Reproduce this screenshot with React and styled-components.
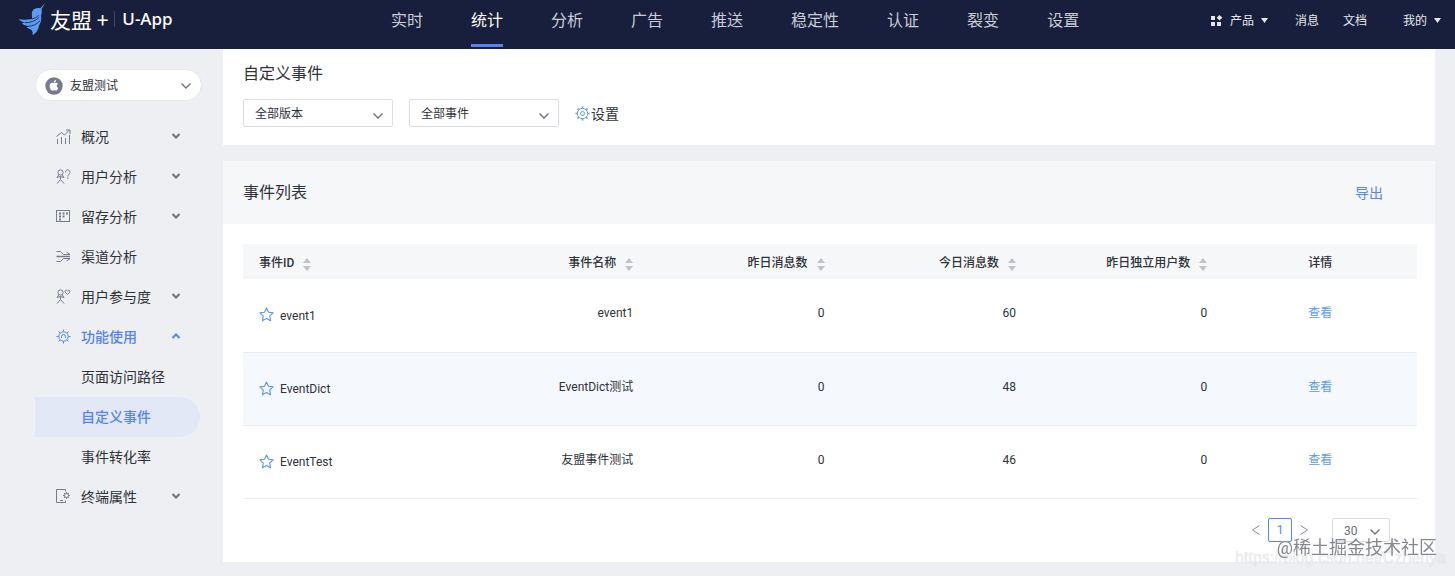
import React, { useState } from 'react';
import styled, { createGlobalStyle, css } from 'styled-components';

const GlobalStyle = createGlobalStyle`
  * {
    box-sizing: border-box;
  }
  body {
    margin: 0;
    background: #edeff3;
    color: #2f3238;
    font-family: Roboto, "Noto Sans CJK SC", sans-serif;
    font-size: 12px;
    line-height: 20px;
  }
  button, select {
    font: inherit;
    color: inherit;
  }
  a {
    text-decoration: none;
  }
`;

/* ---------- top bar ---------- */

const TopBar = styled.header`
  display: flex;
  align-items: stretch;
  height: 49px;
  padding: 0 14px 0 17px;
  background: #181f3c;
  color: #fff;
`;

const Brand = styled.a`
  display: flex;
  align-items: center;
  flex: 0 0 374px;
  height: 38px;
  color: #fff;
`;

const BrandName = styled.span`
  margin-left: 3px;
  font-family: "Noto Sans CJK SC", sans-serif;
  font-size: 21px;
  font-weight: 400;
`;

const BrandProduct = styled.span`
  margin-left: 6px;
  padding-left: 7px;
  border-left: 1px solid #3d4560;
  font-family: "Noto Sans", sans-serif;
  font-size: 17px;
  font-weight: 500;
  line-height: 16px;
`;

const MainNav = styled.nav`
  display: flex;
  gap: 48px;
`;

const MainNavLink = styled.a`
  height: 47px;
  border-bottom: 3px solid ${(p) => (p.$active ? '#5584ee' : 'transparent')};
  color: ${(p) => (p.$active ? '#fff' : '#c9ccd8')};
  font-size: 16px;
  line-height: 42px;
`;

const UserNav = styled.div`
  display: flex;
  align-items: center;
  height: 41px;
  margin-left: auto;
`;

const UserLink = styled.a`
  margin-left: ${(p) => p.$gap || 0}px;
  color: #e6e8f0;
`;

const UserButton = styled.button`
  display: flex;
  align-items: center;
  gap: 7px;
  margin-left: ${(p) => p.$gap || 0}px;
  padding: 0;
  border: 0;
  background: none;
  color: #e6e8f0;
`;

/* ---------- sidebar ---------- */

const Body = styled.div`
  display: flex;
  align-items: flex-start;
`;

const Sidebar = styled.aside`
  flex: 0 0 223px;
  padding: 20px 21px 0 35px;
`;

const AppPicker = styled.button`
  display: flex;
  align-items: center;
  width: 100%;
  height: 32px;
  margin-bottom: 16px;
  padding: 1px 10px 0 9px;
  border: 1px solid #e4e6ec;
  border-radius: 16px;
  background: #fff;
`;

const AppName = styled.span`
  flex: 1;
  margin-left: 7px;
  text-align: left;
`;

const MenuItem = styled.button`
  display: flex;
  align-items: center;
  width: 100%;
  height: 40px;
  padding: 0 21px;
  border: 0;
  background: none;
  color: ${(p) => (p.$active ? '#5584ee' : '#2f3238')};
  font-size: 14px;
  font-weight: ${(p) => (p.$active ? 500 : 400)};

  svg {
    margin-bottom: 2px;
  }
`;

const MenuLabel = styled.span`
  flex: 1;
  margin-left: 10px;
  text-align: left;
`;

const SubItem = styled.a`
  display: block;
  margin-right: 2px;
  padding-left: 46px;
  border-radius: 0 20px 20px 0;
  color: #2f3238;
  font-size: 14px;
  line-height: 40px;
  ${(p) =>
    p.$active &&
    css`
      background: #e3e8f7;
      color: #5584ee;
      font-weight: 500;
    `}
`;

/* ---------- content ---------- */

const Content = styled.main`
  flex: 1;
  min-width: 0;
  padding: 0 20px 14px 0;
`;

const FilterCard = styled.section`
  margin-bottom: 16px;
  padding: 13px 20px 18px;
  background: #fff;
`;

const Title = styled.h1`
  margin: 0;
  font-size: 16px;
  font-weight: 400;
  line-height: 24px;
`;

const Filters = styled.div`
  display: flex;
  align-items: center;
  gap: 16px;
  margin-top: 13px;
`;

const SelectBox = styled.label`
  display: inline-grid;
  align-items: center;
  width: ${(p) => p.$width}px;

  > * {
    grid-area: 1 / 1;
  }
  > svg {
    justify-self: end;
    margin: 5px 10px 0 0;
    pointer-events: none;
  }
`;

const Select = styled.select`
  width: 100%;
  height: ${(p) => p.$height}px;
  padding: 2px 11px 0;
  border: 1px solid #dcdee3;
  border-radius: 2px;
  background: #fff;
  appearance: none;
  color: ${(p) => p.$color || '#2f3238'};
`;

const SettingButton = styled.button`
  display: flex;
  align-items: center;
  gap: 1px;
  padding: 2px 0 0;
  border: 0;
  background: none;
  font-size: 14px;

  svg {
    margin-bottom: 2px;
  }
`;

const ListCard = styled.section`
  background: #fff;
`;

const ListHeader = styled.div`
  display: flex;
  align-items: center;
  justify-content: space-between;
  height: 63px;
  padding: 1px 52px 0 20px;
  border-radius: 3px 3px 0 0;
  background: #f6f7f9;
`;

const ExportLink = styled.a`
  color: #5584ee;
  font-size: 14px;
`;

const ListBody = styled.div`
  padding: 20px 18px 20px 20px;
`;

const Table = styled.table`
  width: 100%;
  border-collapse: collapse;
  table-layout: fixed;
`;

const HeadCell = styled.th`
  width: ${(p) => p.$width};
  height: 35px;
  padding: 3px 16px 0;
  background: #f6f7f9;
  font-weight: 500;
  text-align: ${(p) => p.$align || 'right'};
`;

const SortButton = styled.button`
  display: inline-flex;
  align-items: center;
  gap: 9px;
  padding: 0;
  border: 0;
  background: none;
  font-weight: 500;
  white-space: nowrap;

  svg {
    margin-top: 3px;
  }
`;

const Row = styled.tr`
  background: ${(p) => (p.$highlight ? '#f5f9fe' : '#fff')};
  border-bottom: 1px solid #eaecef;
`;

const Cell = styled.td`
  height: 73px;
  padding: 0 16px 4px;
  text-align: ${(p) => p.$align || 'right'};
`;

const EventId = styled.div`
  display: flex;
  align-items: center;
  gap: 6px;
  padding-top: 5px;
`;

const StarButton = styled.button`
  display: flex;
  padding: 0 0 2px;
  border: 0;
  background: none;
`;

const ViewLink = styled.a`
  color: #5b9bec;
`;

const Pager = styled.div`
  display: flex;
  align-items: center;
  justify-content: flex-end;
  gap: 8px;
  margin-top: 19px;
  padding-right: 27px;
`;

const PageArrow = styled.button`
  display: flex;
  padding: 0;
  border: 0;
  background: none;
`;

const PageNumber = styled.button`
  width: 24px;
  height: 24px;
  padding: 1px 0 0;
  border: 1px solid #5584ee;
  border-radius: 2px;
  background: #fff;
  color: #5584ee;
`;

const PageSize = styled.div`
  display: flex;
  height: 24px;
  margin-left: 16px;
`;

const Credit = styled.div`
  position: fixed;
  right: ${(p) => p.$right}px;
  bottom: ${(p) => p.$bottom}px;
  color: ${(p) => p.$color};
  font-family: ${(p) => p.$font || 'inherit'};
  font-size: ${(p) => p.$size}px;
  line-height: 20px;
  text-shadow: ${(p) => p.$shadow};
  white-space: nowrap;
  pointer-events: none;
`;

/* ---------- icons ---------- */

const BirdLogo = () => (
  <svg width="30" height="33" viewBox="6 8 88 99">
    <path
      d="M89 9 L75 24 Q62 21 54 28 Q48 34 50 47 L50 56 Q30 60 10 57 Q16 65 28 67 L19 69 Q26 77 40 78 L34 81 Q40 87 48 88 Q54 94 52 105 Q69 93 71 76 Q80 60 77 47 Q81 36 79 26 Z"
      fill="#5b9cf5"
    />
    <path
      d="M28 67 Q54 68 72 51 M38 78 Q60 77 74 61 M50 56 Q62 54 70 45"
      fill="none"
      stroke="#181f3c"
      strokeWidth="2.500"
    />
  </svg>
);

const GridIcon = () => (
  <svg width="12" height="12" viewBox="0 0 12 12" fill="currentColor">
    <rect x="0" y="1" width="4" height="4" />
    <path d="M8.500 0l2.800 2.800-2.800 2.800-2.800-2.800z" />
    <rect x="0" y="7" width="4" height="4" />
    <rect x="6" y="7" width="4" height="4" />
  </svg>
);

const CaretDown = () => (
  <svg width="7" height="5" viewBox="0 0 7 5" fill="currentColor">
    <path d="M0 0h7L3.5 5z" />
  </svg>
);

const AppleBadge = () => (
  <svg width="18" height="18" viewBox="0 0 18 18">
    <circle cx="9" cy="9" r="8.7" fill="#757a8e" />
    <path
      d="M9 6.2C7.4 5.3 4.6 5.8 4.6 9c0 2.2 1.4 4.7 2.7 4.7.7 0 .9-.4 1.8-.4s1.1.4 1.8.4c1 0 2-1.3 2.3-2.7-1.9-.9-1.9-3.3-.2-4.2C12 5.600 10.300 5.700 9 6.200z M8.800 5.600c0-1.400.9-2.300 2.200-2.500.1 1.400-.8 2.500-2.200 2.500z"
      fill="#fff"
    />
  </svg>
);

const Chevron = ({ color = '#6b6f78' }) => (
  <svg width="10" height="6" viewBox="0 0 10 6" fill="none" stroke={color} strokeWidth="1.3">
    <path d="M.5.500 5 5 9.500.500" />
  </svg>
);

const MenuChevron = ({ up }) => (
  <svg width="10" height="8" viewBox="0 0 10 8" fill="none" stroke={up ? '#5584ee' : '#6f737b'} strokeWidth="2">
    <path d={up ? 'M1.500 6 5 2.500 8.500 6' : 'M1.500 2 5 5.500 8.500 2'} />
  </svg>
);

const SortIcon = () => (
  <svg width="8" height="13" viewBox="0 0 8 13" fill="#bfc2c7">
    <path d="M4 0l4 5H0z" />
    <path d="M4 13l4-5H0z" />
  </svg>
);

const StarIcon = () => (
  <svg width="15" height="15" viewBox="0 0 15 15" fill="none" stroke="#5b94f0" strokeWidth="1.100" strokeLinejoin="round">
    <path d="M7.500 1l2 4.300 4.600.6-3.400 3.200.9 4.700-4.100-2.300-4.100 2.300.9-4.700L.9 5.900l4.600-.6z" />
  </svg>
);

const GearIcon = () => (
  <svg width="15" height="15" viewBox="0 0 15 15" fill="none" stroke="#5b9cf0">
    <circle cx="7.500" cy="7.500" r="5.200" />
    <circle cx="7.500" cy="7.500" r="2" />
    <path
      d="M7.500.500v1.800M7.500 12.700v1.800M.5 7.500h1.800M12.700 7.500h1.800M2.500 2.500l1.300 1.300M11.200 11.200l1.300 1.300M2.500 12.500l1.300-1.300M11.200 3.800l1.300-1.300"
      strokeWidth="1.600"
    />
  </svg>
);

const ArrowIcon = ({ next }) => (
  <svg width="8" height="10" viewBox="0 0 8 10" fill="none" stroke="#888c94">
    <path d={next ? 'M.5.500 7.500 5 .5 9.500' : 'M7.500.500.5 5l7 4.500'} />
  </svg>
);

const menuShapes = {
  overview: (
    <path d="M1.500 10v5M5.500 8v7M9.500 9v6M13.500 6v9M.5 7.500l5-4 3 2.500 5-5M10 1h4v4" />
  ),
  user: (
    <>
      <circle cx="4.500" cy="3.500" r="2.600" />
      <path d="M2.800 5.800 1 8.500M6.200 5.800 8 8.500M1 8.500 4.500 7.500 8 8.500M4.500 7.500v3L1 14.500M4.500 10.500 8 14.500M9.500 3.500c0-3.500 4.500-3.500 4.500 0 0 1.800-2.200 1.600-2.200 4M11.800 8.500v1.500" />
    </>
  ),
  retention: (
    <>
      <rect x=".5" y="1.500" width="13" height="11" />
      <path d="M3 4.500h2M6.500 4.500h2M10 4.500h2M3 7.500h2M6.500 7.500h2M3 10.500h2" strokeWidth="1.800" />
    </>
  ),
  channel: (
    <>
      <path d="M.5 2.500h4l3 3h6.500M.5 12.500h4l3-3h6.500M10.500 3l3.500 2.500M10.500 12l3.500-2.500" />
      <path d="M.5 7.500h13.500" strokeWidth="1.500" />
    </>
  ),
  engage: (
    <>
      <circle cx="4.500" cy="3.500" r="2.600" />
      <path d="M2.800 5.800 1 8.500M6.200 5.800 8 8.500M1 8.500 4.500 7.500 8 8.500M4.500 7.500v3L1 14.500M4.500 10.500 8 14.500M11.500 5.500 9 3c-.6-1.500 1.500-2.500 2.500-1 1-1.500 3.100-.5 2.500 1z" />
    </>
  ),
  feature: (
    <>
      <circle cx="7.500" cy="7.500" r="4.700" />
      <path d="M5.500 9V7.500a2 2 0 0 1 4 0V9M7.500.500v2M7.500 12.500v2M.5 7.500h2M12.500 7.500h2M2.500 2.500 4 4M11 11l1.500 1.500M2.500 12.500 4 11M11 4l1.500-1.500" />
    </>
  ),
  device: (
    <>
      <path d="M9.500 2.500v-2h-9v13h9v-2M4 11.500h3" />
      <circle cx="10.500" cy="6.500" r="2" />
      <path d="M10.500 3v1.500M10.500 8.500V10M7 6.500h1.500M12.500 6.500H14M8 4l1 1M12 8l1 1M8 9l1-1M12 5l1-1" />
    </>
  ),
};

const MenuIcon = ({ name, color }) => (
  <svg width="15" height="15" viewBox="0 0 15 15" fill="none" stroke={color} strokeWidth="1">
    {menuShapes[name]}
  </svg>
);

/* ---------- data ---------- */

const navItems = ['实时', '统计', '分析', '广告', '推送', '稳定性', '认证', '裂变', '设置'];

const menu = [
  { label: '概况', icon: 'overview', arrow: true },
  { label: '用户分析', icon: 'user', arrow: true },
  { label: '留存分析', icon: 'retention', arrow: true },
  { label: '渠道分析', icon: 'channel' },
  { label: '用户参与度', icon: 'engage', arrow: true },
  {
    label: '功能使用',
    icon: 'feature',
    arrow: true,
    children: ['页面访问路径', '自定义事件', '事件转化率'],
  },
  { label: '终端属性', icon: 'device', arrow: true },
];

const columns = [
  { label: '事件ID', width: '18.3%', align: 'left' },
  { label: '事件名称', width: '16.3%' },
  { label: '昨日消息数', width: '16.3%' },
  { label: '今日消息数', width: '16.3%' },
  { label: '昨日独立用户数', width: '16.3%' },
];

const events = [
  { id: 'event1', name: 'event1', yesterday: 0, today: 60, users: 0 },
  { id: 'EventDict', name: 'EventDict测试', yesterday: 0, today: 48, users: 0 },
  { id: 'EventTest', name: '友盟事件测试', yesterday: 0, today: 46, users: 0 },
];

function Header() {
  return (
    <TopBar>
      <Brand href="#">
        <BirdLogo />
        <BrandName>友盟 +</BrandName>
        <BrandProduct>U-App</BrandProduct>
      </Brand>
      <MainNav>
        {navItems.map((item) => (
          <MainNavLink key={item} href="#" $active={item === '统计'}>
            {item}
          </MainNavLink>
        ))}
      </MainNav>
      <UserNav>
        <UserButton>
          <GridIcon />
          产品
          <CaretDown />
        </UserButton>
        <UserLink href="#" $gap={27}>消息</UserLink>
        <UserLink href="#" $gap={24}>文档</UserLink>
        <UserButton $gap={36}>
          我的
          <CaretDown />
        </UserButton>
      </UserNav>
    </TopBar>
  );
}

function SideMenu() {
  return (
    <Sidebar>
      <AppPicker>
        <AppleBadge />
        <AppName>友盟测试</AppName>
        <Chevron />
      </AppPicker>
      <nav>
        {menu.map(({ label, icon, arrow, children }) => (
          <React.Fragment key={label}>
            <MenuItem $active={!!children} aria-expanded={!!children}>
              <MenuIcon name={icon} color={children ? '#5584ee' : '#777c8c'} />
              <MenuLabel>{label}</MenuLabel>
              {arrow && <MenuChevron up={!!children} />}
            </MenuItem>
            {children &&
              children.map((child) => (
                <SubItem key={child} href="#" $active={child === '自定义事件'}>
                  {child}
                </SubItem>
              ))}
          </React.Fragment>
        ))}
      </nav>
    </Sidebar>
  );
}

function EventTable() {
  return (
    <Table>
      <thead>
        <tr>
          {columns.map((col) => (
            <HeadCell key={col.label} scope="col" $width={col.width} $align={col.align}>
              <SortButton>
                {col.label}
                <SortIcon />
              </SortButton>
            </HeadCell>
          ))}
          <HeadCell scope="col" $align="center">详情</HeadCell>
        </tr>
      </thead>
      <tbody>
        {events.map((event, i) => (
          <Row key={event.id} $highlight={i === 1}>
            <Cell $align="left">
              <EventId>
                <StarButton aria-label={`收藏 ${event.id}`}>
                  <StarIcon />
                </StarButton>
                {event.id}
              </EventId>
            </Cell>
            <Cell>{event.name}</Cell>
            <Cell>{event.yesterday}</Cell>
            <Cell>{event.today}</Cell>
            <Cell>{event.users}</Cell>
            <Cell $align="center">
              <ViewLink href="#">查看</ViewLink>
            </Cell>
          </Row>
        ))}
      </tbody>
    </Table>
  );
}

function App() {
  const [version, setVersion] = useState('全部版本');
  const [kind, setKind] = useState('全部事件');
  const [size, setSize] = useState('30');

  return (
    <>
      <GlobalStyle />
      <Header />
      <Body>
        <SideMenu />
        <Content>
          <FilterCard>
            <Title>自定义事件</Title>
            <Filters>
              <SelectBox $width={150}>
                <Select $height={28} aria-label="版本" value={version} onChange={(e) => setVersion(e.target.value)}>
                  <option>全部版本</option>
                </Select>
                <Chevron />
              </SelectBox>
              <SelectBox $width={150}>
                <Select $height={28} aria-label="事件" value={kind} onChange={(e) => setKind(e.target.value)}>
                  <option>全部事件</option>
                </Select>
                <Chevron />
              </SelectBox>
              <SettingButton>
                <GearIcon />
                设置
              </SettingButton>
            </Filters>
          </FilterCard>
          <ListCard>
            <ListHeader>
              <Title as="h2">事件列表</Title>
              <ExportLink href="#">导出</ExportLink>
            </ListHeader>
            <ListBody>
              <EventTable />
              <Pager>
                <PageArrow aria-label="上一页">
                  <ArrowIcon />
                </PageArrow>
                <PageNumber>1</PageNumber>
                <PageArrow aria-label="下一页">
                  <ArrowIcon next />
                </PageArrow>
                <PageSize>
                  <SelectBox $width={58}>
                    <Select
                      $height={24}
                      $color="#6b6f78"
                      aria-label="每页条数"
                      value={size}
                      onChange={(e) => setSize(e.target.value)}
                    >
                      <option>30</option>
                    </Select>
                    <Chevron />
                  </SelectBox>
                </PageSize>
              </Pager>
            </ListBody>
          </ListCard>
        </Content>
      </Body>
      <Credit
        $right={9}
        $bottom={8}
        $size={16}
        $font={'"Liberation Sans", sans-serif'}
        $color="rgba(255, 255, 255, 0.7)"
        $shadow="0 0 1px rgba(150, 152, 160, 0.6)"
      >
        https://blog.csdn.net/Czhenya
      </Credit>
      <Credit $right={18} $bottom={18} $size={18} $color="#85888e" $shadow="0 0 1px #fff">
        @稀土掘金技术社区
      </Credit>
    </>
  );
}

export default App;
